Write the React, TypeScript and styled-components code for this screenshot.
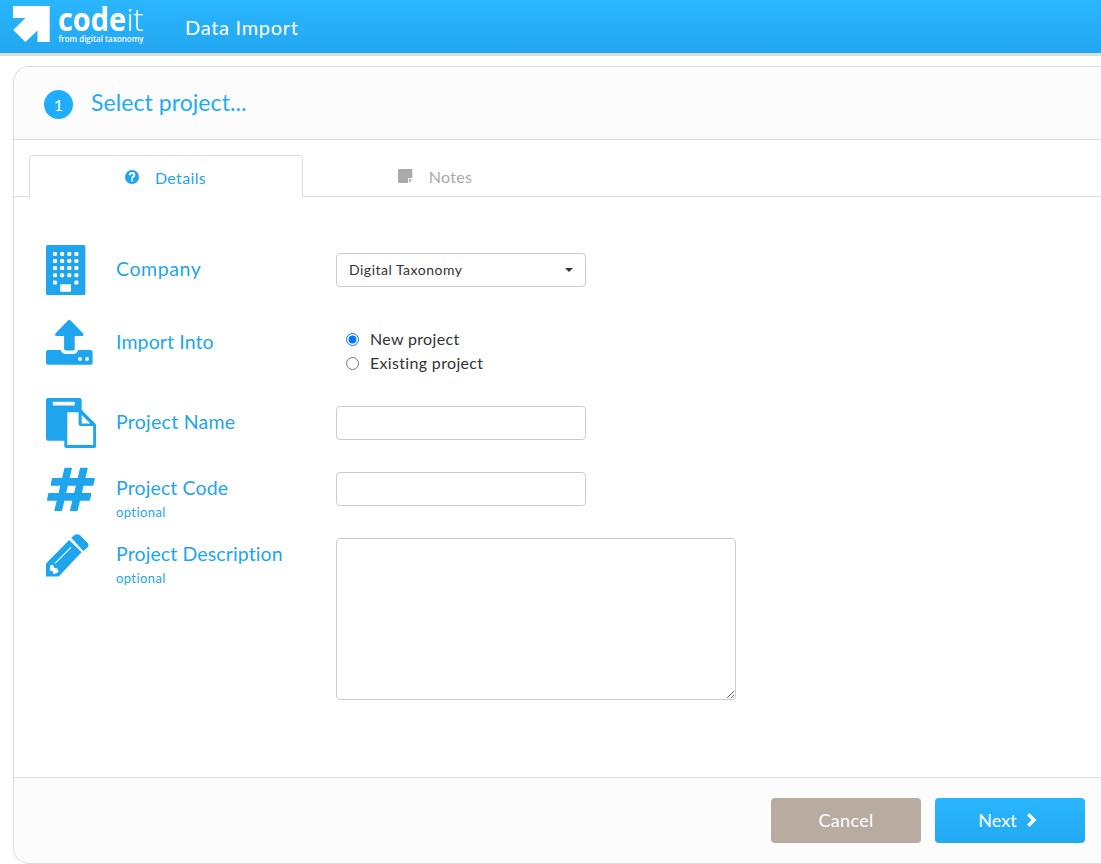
import React from "react";
import styled, { createGlobalStyle } from "styled-components";

const GlobalStyle = createGlobalStyle`
  *, *::before, *::after { box-sizing: border-box; }
  body {
    margin: 0;
    background: #fff;
    color: #333;
    font-family: Lato, "Open Sans", sans-serif;
    overflow: hidden;
  }
`;

const Page = styled.div`
  height: 864px;
  display: flex;
  flex-direction: column;
`;

const Header = styled.header`
  height: 56px;
  flex: none;
  display: flex;
  align-items: flex-start;
  padding-left: 13px;
  background: linear-gradient(#2ab6ff, #22a7f0) padding-box;
  border-bottom: 3px solid #ddd;
`;

const Logo = styled.svg`
  width: 132px;
  height: 53px;
  flex: none;
  overflow: visible;
  fill: #fff;
  font-family: "Open Sans", "Noto Sans", sans-serif;
`;

const HeaderTitle = styled.h1`
  margin: 0 0 0 40px;
  font-size: 20px;
  font-weight: 400;
  line-height: 55px;
  letter-spacing: 0.7px;
  color: #fff;
`;

const Panel = styled.main`
  margin: 10px 0 0 13px;
  height: 798px;
  flex: none;
  display: flex;
  flex-direction: column;
  border: 1px solid #ddd;
  border-right: 0;
  border-radius: 16px 0 0 16px;
  overflow: hidden;
`;

const PanelHeader = styled.div`
  height: 73px;
  flex: none;
  display: flex;
  align-items: center;
  gap: 18px;
  padding-left: 30px;
  background: #fcfcfc;
  border-bottom: 1px solid #ddd;
`;

const StepBadge = styled.span`
  width: 29px;
  height: 29px;
  margin-top: 3px;
  border-radius: 50%;
  background: #1faeff;
  color: #fff;
  font-size: 16px;
  line-height: 29px;
  text-align: center;
`;

const StepTitle = styled.h2`
  margin: 0 0 2px;
  font-size: 23px;
  font-weight: 400;
  letter-spacing: 0.07px;
  color: #22abf5;
`;

const Tabs = styled.nav`
  height: 58px;
  flex: none;
  display: flex;
  align-items: flex-start;
  padding: 15px 0 0 15px;
`;

const Tab = styled.div<{ $active?: boolean }>`
  width: ${(p) => (p.$active ? 274 : 264)}px;
  height: ${(p) => (p.$active ? 43 : 42)}px;
  display: flex;
  align-items: center;
  justify-content: center;
  gap: 16px;
  padding: ${(p) => (p.$active ? "0 1px 0 0" : "1px 0 0")};
  font-size: 16px;
  letter-spacing: 0.35px;
  color: ${(p) => (p.$active ? "#1ea5ee" : "#aaa")};
  border: 1px solid ${(p) => (p.$active ? "#ddd" : "transparent")};
  border-width: ${(p) => (p.$active ? "1px 1px 0" : "0 0 1px")};
  border-bottom-color: #ddd;
  border-radius: ${(p) => (p.$active ? "4px 4px 0 0" : "0")};
`;

const TabRule = styled.div<{ $lead?: boolean }>`
  height: 42px;
  flex: ${(p) => (p.$lead ? "0 0 15px" : "1")};
  margin-left: ${(p) => (p.$lead ? "-15px" : "0")};
  border-bottom: 1px solid #ddd;
`;

const Form = styled.form`
  flex: 1;
  padding: 47px 0 0 32px;
`;

const Row = styled.div<{ $height: number }>`
  height: ${(p) => p.$height}px;
  display: flex;
  align-items: flex-start;
`;

const IconCell = styled.div`
  width: 70px;
  flex: none;
  svg {
    display: block;
    fill: #1ea5ee;
  }
`;

const LabelCell = styled.label<{ $top: number; $spacing: number }>`
  width: 220px;
  flex: none;
  padding-top: ${(p) => p.$top}px;
  font-size: 19.5px;
  line-height: 24px;
  letter-spacing: ${(p) => p.$spacing}px;
  color: #1ea5ee;
`;

const Optional = styled.small`
  display: block;
  font-size: 13px;
  line-height: 24px;
  letter-spacing: 0.4px;
`;

const Control = styled.div<{ $top: number }>`
  padding-top: ${(p) => p.$top}px;
`;

const Select = styled.button`
  width: 250px;
  height: 34px;
  display: flex;
  align-items: center;
  justify-content: space-between;
  padding: 0 12px 1px;
  border: 1px solid #ccc;
  border-radius: 4px;
  background: #fff;
  color: #333;
  font: 14px Lato, sans-serif;
  letter-spacing: 0.5px;
`;

const Caret = styled.span`
  margin-top: 1px;
  border: 4px solid transparent;
  border-top-color: #333;
  border-bottom: 0;
`;

const Input = styled.input`
  display: block;
  width: 250px;
  height: 34px;
  border: 1px solid #ccc;
  border-radius: 4px;
`;

const TextArea = styled.textarea`
  display: block;
  width: 400px;
  height: 162px;
  border: 1px solid #ccc;
  border-radius: 4px;
`;

const Radio = styled.label`
  height: 24px;
  display: flex;
  align-items: center;
  gap: 11px;
  padding-left: 10px;
  font-size: 16px;
  line-height: 22px;
  letter-spacing: 0.33px;
  input {
    width: 13px;
    height: 13px;
    margin: 1px 0 0;
  }
`;

const Footer = styled.footer`
  height: 86px;
  flex: none;
  display: flex;
  justify-content: flex-end;
  gap: 14px;
  padding: 20px 16px 0 0;
  background: #fcfcfc;
  border-top: 1px solid #ddd;
`;

const Button = styled.button<{ $primary?: boolean }>`
  width: 150px;
  height: 45px;
  display: flex;
  align-items: center;
  justify-content: center;
  gap: 9px;
  padding: ${(p) => (p.$primary ? "0 5px 1px 0" : "0 0 1px")};
  border: 0;
  border-radius: 4px;
  background: ${(p) => (p.$primary ? "linear-gradient(#2ab6ff, #22a9f2)" : "#b8aca0")};
  color: #fff;
  font: 18px Lato, sans-serif;
  letter-spacing: ${(p) => (p.$primary ? "0" : "0.3px")};
`;

const xs = [9, 16.1, 23.3, 30.4];
const ys = [9, 16, 23.1, 30.3];

const BuildingIcon = () => (
  <svg width="50" height="50" viewBox="0 0 50 50">
    <rect width="39.4" height="50" rx="1.5" />
    <g fill="#fff">
      {ys.map((y) => xs.map((x) => <rect key={`${x}-${y}`} x={x - 2} y={y - 2} width="4" height="4" rx="1.2" />))}
      <rect x="7" y="35.6" width="4" height="4" rx="1.2" />
      <rect x="28.4" y="35.6" width="4" height="4" rx="1.2" />
      <rect x="14.2" y="39.3" width="10.8" height="7.4" rx="0.5" />
    </g>
  </svg>
);

const UploadIcon = () => (
  <svg width="50" height="50" viewBox="0 0 50 50">
    <path d="M22.2 1.2q1.1-1 2.2 0L37.2 14.6q1 2.200-.9 2.400h-7.6v12.800q0 1.600-1.600 1.600h-7.400q-1.600 0-1.600-1.600V17h-7.700q-2-.2-1-2.400z" />
    <path d="M2 31h12.600q1.400 4 5 4h7.500q3.600 0 5-4h12.500q2 0 2 2v10.700q0 2-2 2H2q-2 0-2-2V33q0-2 2-2z" />
    <circle cx="34" cy="40" r="1.9" fill="#fff" />
    <circle cx="41.1" cy="40" r="1.9" fill="#fff" />
  </svg>
);

const PasteIcon = () => (
  <svg width="51" height="50" viewBox="0 0 51 50">
    <path d="M2 0h31.500q2.200 0 2.200 2.200v9.800L49.300 25.500q.8.800.8 2V48q0 1.900-1.900 1.900H20.200q-1.900 0-1.900-1.900v-5.200H2q-2 0-2-2V2q0-2 2-2z" />
    <path fill="#fff" d="M7.500 3.700h20.500q.7 0 .7.700v2.400q0 .7-.7.700H7.500q-.7 0-.7-.7V4.400q0-.7.700-.7zM21.300 14.300h11.300v11.700q0 2 2 2h12.600v19H21.300zM35.700 17l8.600 8.400h-8.600z" />
  </svg>
);

const HashIcon = () => (
  <svg width="50" height="50" viewBox="0 0 50 50">
    <g stroke="#1ea5ee" strokeWidth="1.2" strokeLinejoin="round">
      <path d="M19 1.300h6.300L15.500 43.400H9zM34.600 1.300h6.500L31.100 43.400h-6.500z" />
      <path d="M6.500 11.600h41.800l-1.500 6.500H5.300zM2.900 26.600h41.800l-1.300 6.500H1.600z" />
    </g>
  </svg>
);

const PencilIcon = () => (
  <svg width="50" height="50" viewBox="0 0 50 50">
    <path d="M0 29.500 23.200 6 35.500 18.300 12.700 42.500H0z" />
    <path d="M25.200 3.800 28.500.9q3-1.600 5.400.4l7.800 7.800q1.500 2.200-.2 4.400l-4.200 3.500z" />
    <path d="M9 29.300 25 13.300" stroke="#fff" strokeWidth="1.1" />
    <path fill="#fff" d="M4.300 31.300 7 30.800l1.200 3 3.300.8 1 3.400-3 1.600-2.200.400-.600-2.700-3-.7z" />
  </svg>
);

const HelpIcon = () => (
  <svg width="14" height="14" viewBox="0 0 14 14">
    <circle cx="7" cy="7" r="7" fill="currentColor" />
    <path d="M4.500 5.300Q4.900 3.100 7.100 3.100q2.200.1 2.200 1.900 0 1.100-1.200 1.800-1 .6-1 1.700" fill="none" stroke="#fff" strokeWidth="2" />
    <rect x="6" y="9.400" width="2.100" height="2" fill="#fff" />
  </svg>
);

const NoteIcon = () => (
  <svg width="15" height="14" viewBox="0 0 15 14">
    <path d="M1 0h12.500q.8 0 .8.800V9H10v5H1q-1 0-1-1V1q0-1 1-1zM11 10.200h3.300L11 13.900z" fill="currentColor" />
  </svg>
);

const ChevronIcon = () => (
  <svg width="11" height="16" viewBox="0 0 11 16">
    <path d="M2.200 2.300 8 8 2.200 13.700" fill="none" stroke="#fff" strokeWidth="3.400" />
  </svg>
);

export default function App() {
  return (
    <>
      <GlobalStyle />
      <Page>
        <Header>
          <Logo viewBox="0 0 132 53">
            <path d="M0 6h36.700v36H24.500V30.400L12.400 42 .3 30 12.400 18H0z" />
            <text x="45" y="31.300" fontSize="32" fontWeight="700" textLength="68" lengthAdjust="spacingAndGlyphs">code</text>
            <text x="113.500" y="31.300" fontSize="31" fontWeight="300" textLength="17" lengthAdjust="spacingAndGlyphs">it</text>
            <text x="45.500" y="42" fontSize="8.500" fontWeight="600" textLength="85" lengthAdjust="spacingAndGlyphs">from digital taxonomy</text>
          </Logo>
          <HeaderTitle>Data Import</HeaderTitle>
        </Header>
        <Panel>
          <PanelHeader>
            <StepBadge>1</StepBadge>
            <StepTitle>Select project...</StepTitle>
          </PanelHeader>
          <Tabs>
            <TabRule $lead />
            <Tab $active><HelpIcon />Details</Tab>
            <Tab><NoteIcon />Notes</Tab>
            <TabRule />
          </Tabs>
          <Form>
            <Row $height={74}>
              <IconCell><BuildingIcon /></IconCell>
              <LabelCell $top={12} $spacing={0.6}>Company</LabelCell>
              <Control $top={8}>
                <Select type="button">Digital Taxonomy<Caret /></Select>
              </Control>
            </Row>
            <Row $height={79}>
              <IconCell><UploadIcon /></IconCell>
              <LabelCell $top={11} $spacing={0.12}>Import Into</LabelCell>
              <Control $top={8}>
                <Radio><input type="radio" name="target" defaultChecked />New project</Radio>
                <Radio><input type="radio" name="target" />Existing project</Radio>
              </Control>
            </Row>
            <Row $height={69}>
              <IconCell><PasteIcon /></IconCell>
              <LabelCell $top={12} $spacing={0.27}>Project Name</LabelCell>
              <Control $top={8}><Input /></Control>
            </Row>
            <Row $height={67}>
              <IconCell><HashIcon /></IconCell>
              <LabelCell $top={9} $spacing={0.13}>Project Code<Optional>optional</Optional></LabelCell>
              <Control $top={5}><Input /></Control>
            </Row>
            <Row $height={170}>
              <IconCell><PencilIcon /></IconCell>
              <LabelCell $top={8} $spacing={0.12}>Project Description<Optional>optional</Optional></LabelCell>
              <Control $top={4}><TextArea /></Control>
            </Row>
          </Form>
          <Footer>
            <Button>Cancel</Button>
            <Button $primary>Next<ChevronIcon /></Button>
          </Footer>
        </Panel>
      </Page>
    </>
  );
}
